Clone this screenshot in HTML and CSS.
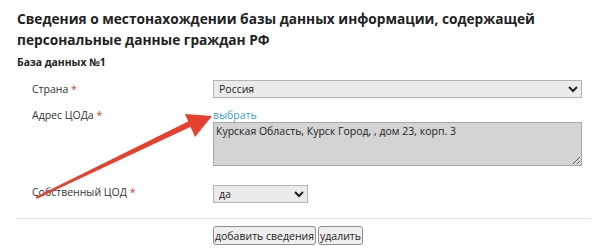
FILE: index.html
```html
<!DOCTYPE html>
<html lang="ru">
<head>
    <meta charset="UTF-8">
    <meta name="viewport" content="width=device-width, initial-scale=1.0">
    <title>Сведения о местонахождении базы данных</title>
    <link rel="stylesheet" href="styles.css">
</head>
<body>
    <div class="page">
        <h2 class="page-title">Сведения о местонахождении базы данных информации, содержащей персональные данные граждан РФ</h2>
        <h3 class="db-title">База данных №1</h3>

        <div class="form-body">
            <div class="form-row row-country">
                <label class="field-label">Страна <span class="req">*</span></label>
                <select class="field-select wide">
                    <option>Россия</option>
                </select>
            </div>

            <div class="form-row row-address">
                <label class="field-label">Адрес ЦОДа <span class="req">*</span></label>
                <div class="field-stack">
                    <a href="#" class="pick-link">выбрать</a>
                    <textarea class="field-area" readonly>Курская Область, Курск Город, , дом 23, корп. 3</textarea>
                </div>
            </div>

            <div class="form-row row-own">
                <label class="field-label">Собственный ЦОД <span class="req">*</span></label>
                <select class="field-select narrow">
                    <option>да</option>
                </select>
            </div>
        </div>

        <hr class="divider">

        <div class="actions">
            <button class="btn">добавить сведения</button>
            <button class="btn">удалить</button>
        </div>

        <!-- annotation arrow drawn over the form -->
        <svg class="callout" width="600" height="250" viewBox="0 0 600 250">
            <path d="M37 197.5 L193 124.5 L191.5 121 Z" fill="#e8402e" stroke="#e8402e" stroke-width="2" stroke-linejoin="round"/>
            <polygon points="212,116 185,114 195,137" fill="#e8402e"/>
        </svg>
    </div>
</body>
</html>
```

FILE: styles.css
```css
body {
    margin: 0;
    padding: 0;
    background: #fff;
    font-family: 'Open Sans', 'DejaVu Sans', sans-serif;
    color: #333;
}

.page {
    position: relative;
    width: 600px;
    height: 250px;
    box-sizing: border-box;
    padding: 8px 13px 0 17px;
    overflow: hidden;
}

.page-title {
    margin: 0;
    max-width: 530px;
    font-size: 13.7px;
    line-height: 21px;
    font-weight: 700;
    color: #222;
}

.db-title {
    margin: 5px 0 0;
    font-size: 10.4px;
    line-height: 15px;
    font-weight: 700;
    color: #222;
}

.form-body {
    padding-left: 15px;
    margin-top: 10px;
}

.form-row {
    display: flex;
    align-items: flex-start;
}

.field-label {
    width: 181px;
    flex: none;
    font-size: 10.5px;
    line-height: 18px;
    color: #333;
}

.req {
    color: #d93a2b;
}

.row-address {
    margin-top: 10px;
}

.row-address .field-label {
    line-height: 14px;
}

.row-own {
    margin-top: 19px;
}

.row-own .field-label {
    line-height: 14px;
}

.field-select {
    height: 18px;
    box-sizing: border-box;
    margin: 0;
    padding: 0 0 0 1px;
    font-family: inherit;
    font-size: 10.5px;
    color: #222;
    background-color: #ebebeb;
    border: 1px solid #b4b4b4;
    border-radius: 0;
}

.wide {
    width: 369px;
}

.narrow {
    width: 95px;
}

.field-stack {
    display: flex;
    flex-direction: column;
}

.pick-link {
    font-size: 10.5px;
    line-height: 14px;
    color: #3b9fd8;
    text-decoration: none;
}

.field-area {
    width: 369px;
    height: 44px;
    box-sizing: border-box;
    margin: 0;
    padding: 1px 2px;
    font-family: inherit;
    font-size: 10.5px;
    line-height: 14px;
    color: #222;
    background: #d4d4d4;
    border: 1px solid #a8a8a8;
    resize: both;
}

.divider {
    margin: 15px -4px 0 -1px;
    border: none;
    border-top: 1px solid #e2e2e2;
}

.actions {
    display: flex;
    gap: 2px;
    padding-left: 196px;
    margin-top: 7px;
}

.btn {
    height: 19px;
    margin: 0;
    padding: 0 1px;
    font-family: inherit;
    font-size: 10.5px;
    line-height: 16px;
    color: #222;
    background: #efefef;
    border: 1px solid #8f8f8f;
    border-radius: 3px;
}

.callout {
    position: absolute;
    left: 0;
    top: 0;
    pointer-events: none;
}
```
